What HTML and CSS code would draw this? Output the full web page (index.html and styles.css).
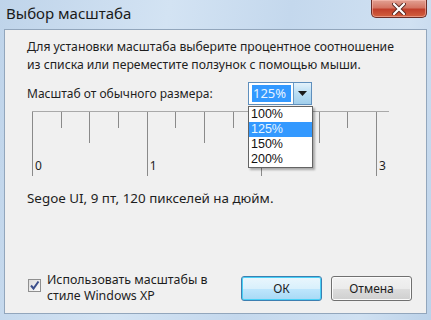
FILE: index.html
```
<!DOCTYPE html>
<html lang="ru">
<head>
    <meta charset="UTF-8">
    <title>Выбор масштаба</title>
    <link rel="stylesheet" href="styles.css">
</head>
<body>
    <div class="window">
        <div class="titlebar">
            <span class="title">Выбор масштаба</span>
            <button class="close-btn" type="button">
                <svg width="14" height="12" viewBox="0 0 14 12">
                    <path d="M2 1 L12 11 M12 1 L2 11" stroke="#5a2a24" stroke-width="4" stroke-linecap="round"/>
                    <path d="M2 1 L12 11 M12 1 L2 11" stroke="#ffffff" stroke-width="2.2" stroke-linecap="round"/>
                </svg>
            </button>
        </div>

        <div class="client">
            <p class="intro">Для установки масштаба выберите процентное соотношение<br>из списка или переместите ползунок с помощью мыши.</p>

            <div class="scale-row">
                <span class="scale-label">Масштаб от обычного размера:</span>
                <div class="combo">
                    <div class="combo-field"><span class="combo-value">125%</span></div>
                    <div class="combo-btn">
                        <svg width="9" height="5" viewBox="0 0 9 5"><path d="M0 0 H9 L4.5 5 Z" fill="#1a1a1a"/></svg>
                    </div>
                    <ul class="combo-list">
                        <li>100%</li>
                        <li class="selected">125%</li>
                        <li>150%</li>
                        <li>200%</li>
                    </ul>
                </div>
            </div>

            <div class="ruler">
                <div class="ticks">
                    <div class="tick major"><span class="tick-label">0</span></div>
                    <div class="tick quarter"></div>
                    <div class="tick half"></div>
                    <div class="tick quarter"></div>
                    <div class="tick major"><span class="tick-label">1</span></div>
                    <div class="tick quarter"></div>
                    <div class="tick half"></div>
                    <div class="tick quarter"></div>
                    <div class="tick major"></div>
                    <div class="tick quarter"></div>
                    <div class="tick half"></div>
                    <div class="tick quarter"></div>
                    <div class="tick major"><span class="tick-label">3</span></div>
                </div>
            </div>

            <p class="font-info">Segoe UI, 9 пт, 120 пикселей на дюйм.</p>

            <div class="footer">
                <label class="check">
                    <span class="check-box">
                        <svg width="11" height="11" viewBox="0 0 11 11"><path d="M2 5.5 L4.5 8.5 L9.5 1.5" fill="none" stroke="#3b4f8c" stroke-width="2"/></svg>
                    </span>
                    <span class="check-text">Использовать масштабы в<br>стиле Windows XP</span>
                </label>
                <div class="buttons">
                    <button class="btn btn-default" type="button">ОК</button>
                    <button class="btn" type="button">Отмена</button>
                </div>
            </div>
        </div>
    </div>
</body>
</html>
```

FILE: styles.css
```
* {
    margin: 0;
    padding: 0;
    box-sizing: border-box;
}

body {
    font-family: 'Noto Sans', 'Open Sans', sans-serif;
    font-size: 12px;
    color: #1e1e1e;
    background: #c6d9ec;
}

.window {
    width: 431px;
    height: 320px;
    background: linear-gradient(100deg, #bfd4ea 0%, #d3e3f3 35%, #c4d8ed 60%, #d0e1f2 85%, #bcd2e9 100%);
    display: flex;
    flex-direction: column;
}

/* заголовок окна */
.titlebar {
    height: 29px;
    display: flex;
    align-items: flex-start;
    justify-content: space-between;
    padding-left: 6px;
    padding-right: 4px;
}

.title {
    font-size: 15px;
    line-height: 27px;
    color: #1a1a1a;
}

.close-btn {
    width: 56px;
    height: 18px;
    border: 1px solid #6b2e28;
    border-top: none;
    border-radius: 0 0 5px 5px;
    background: linear-gradient(#e2a193 0%, #d47563 45%, #c13f2b 55%, #d2613f 100%);
    box-shadow: inset 0 0 0 1px rgba(255, 200, 190, 0.5);
    display: flex;
    align-items: center;
    justify-content: center;
}

/* рабочая область */
.client {
    flex: 1;
    margin: 0 4px 6px 4px;
    background: #f0f0f0;
    border: 1px solid #92a6bc;
    padding: 8px 14px 0 22px;
    display: flex;
    flex-direction: column;
}

.intro {
    font-size: 12.2px;
    line-height: 18px;
}

.scale-row {
    display: flex;
    align-items: center;
    margin-top: 8px;
    height: 23px;
}

.scale-label {
    width: 221px;
}

.combo {
    position: relative;
    width: 64px;
    height: 23px;
    display: flex;
    border: 1px solid #5f8fbd;
    background: #fff;
}

.combo-field {
    flex: 1;
    padding: 2px 2px 2px 3px;
}

.combo-value {
    display: block;
    background: #3399ff;
    color: #e8f4ff;
    line-height: 17px;
    padding-left: 1px;
    font-size: 13px;
}

.combo-btn {
    width: 18px;
    border-left: 1px solid #6a9ac6;
    background: linear-gradient(#e4f2fb, #b9ddf3 50%, #a2cfec);
    display: flex;
    align-items: center;
    justify-content: center;
}

.combo-list {
    position: absolute;
    left: -1px;
    top: 23px;
    width: 65px;
    list-style: none;
    background: #fff;
    border: 1px solid #646464;
    box-shadow: 2px 2px 2px rgba(0, 0, 0, 0.3);
    z-index: 2;
}

    .combo-list li {
        font-family: 'Liberation Sans', Arial, sans-serif;
        font-size: 12.5px;
        line-height: 15px;
        height: 15px;
        padding-left: 2px;
        color: #111;
    }

    .combo-list li.selected {
        background: #3399ff;
        color: #e6f6ff;
    }

/* линейка */
.ruler {
    margin: 6px 0 0 5px;
    width: 357px;
    border-top: 1px solid #a9a9a9;
}

.ticks {
    width: 345px;
    display: flex;
    justify-content: space-between;
    align-items: flex-start;
}

.tick {
    width: 0;
    border-left: 1px solid #8a8a8a;
}

.tick.quarter {
    height: 16px;
}

.tick.half {
    height: 31px;
}

.tick.major {
    height: 64px;
    display: flex;
    align-items: flex-end;
}

.tick-label {
    padding: 0 0 3px 2px;
    font-size: 12px;
    line-height: 14px;
}

.font-info {
    margin-top: 14px;
    font-size: 13.4px;
    line-height: 17px;
}

/* нижняя панель */
.footer {
    margin-top: auto;
    margin-bottom: 9px;
    display: flex;
    align-items: center;
    justify-content: space-between;
}

.check {
    display: flex;
    align-items: flex-start;
    gap: 6px;
    margin-left: 1px;
}

.check-box {
    width: 13px;
    height: 13px;
    margin-top: 7px;
    border: 1px solid #8f8f8f;
    background: linear-gradient(135deg, #dcdcdc, #fbfbfb);
    display: flex;
    align-items: center;
    justify-content: center;
}

.check-text {
    font-size: 12.4px;
    line-height: 16px;
}

.buttons {
    display: flex;
    gap: 9px;
}

.btn {
    width: 81px;
    height: 25px;
    font-family: inherit;
    font-size: 12px;
    color: #1e1e1e;
    border: 1px solid #707070;
    border-radius: 3px;
    background: linear-gradient(#f2f2f2 0%, #ebebeb 50%, #dddddd 51%, #cfcfcf 100%);
    box-shadow: inset 0 0 0 1px #fbfbfb;
}

.btn-default {
    border-color: #3c7fb1;
    background: linear-gradient(#eaf6fd 0%, #d9f0fc 50%, #bee6fd 51%, #a7d9f5 100%);
    box-shadow: inset 0 0 0 1px #48d0f6;
}
```
